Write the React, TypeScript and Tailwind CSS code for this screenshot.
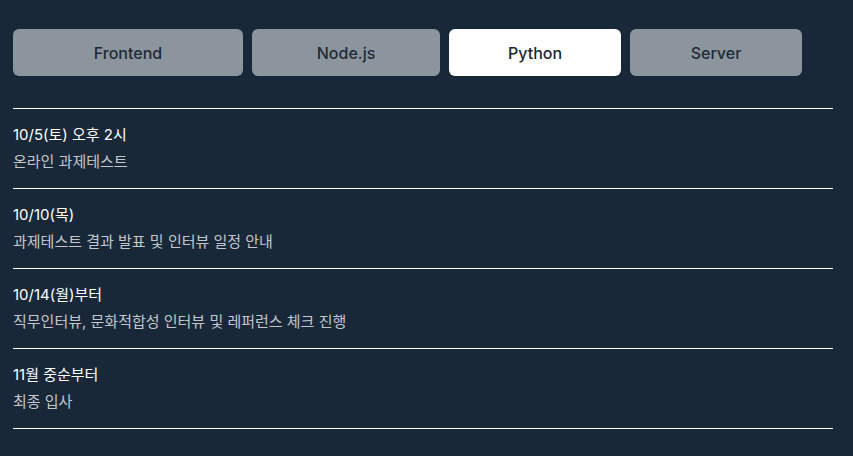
const tabs = [
  { label: "Frontend", w: "w-[230px]", active: false },
  { label: "Node.js", w: "w-[188px]", active: false },
  { label: "Python", w: "w-[172px]", active: true },
  { label: "Server", w: "w-[172px]", active: false },
];

const steps = [
  { date: "10/5(토) 오후 2시", desc: "온라인 과제테스트" },
  { date: "10/10(목)", desc: "과제테스트 결과 발표 및 인터뷰 일정 안내" },
  { date: "10/14(월)부터", desc: "직무인터뷰, 문화적합성 인터뷰 및 레퍼런스 체크 진행" },
  { date: "11월 중순부터", desc: "최종 입사" },
];

export default function App() {
  return (
    <div
      className="min-h-[456px] w-full bg-[#182839] px-[13px] pt-[29px]"
      style={{ fontFamily: 'Inter, "Noto Sans CJK KR", sans-serif' }}
    >
      <div className="flex gap-[9px]">
        {tabs.map((t) => (
          <button
            key={t.label}
            type="button"
            className={`${t.w} h-[47px] rounded-md text-base font-medium ${
              t.active ? "bg-white text-[#1b2532]" : "bg-[#8c949d] text-[#1f2a37]"
            }`}
          >
            {t.label}
          </button>
        ))}
      </div>

      <ul className="mt-[32px] w-[820px] border-t border-white">
        {steps.map((s) => (
          <li key={s.date} className="h-[80px] border-b border-white pt-[12px]">
            <p className="text-[15px] font-normal leading-[27px] text-white">{s.date}</p>
            <p className="text-[15px] font-normal leading-[27px] text-[#c3c7cd]">{s.desc}</p>
          </li>
        ))}
      </ul>
    </div>
  );
}
